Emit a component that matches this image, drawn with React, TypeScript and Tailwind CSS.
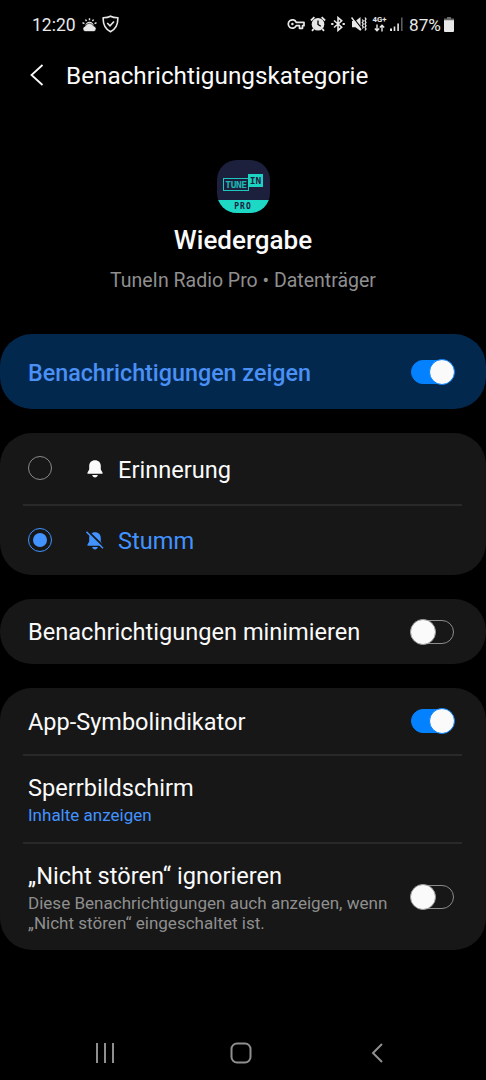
import { useState } from "react";
import clsx from "clsx";

function Switch({ on, onChange }: { on: boolean; onChange: () => void }) {
  return (
    <button
      role="switch"
      aria-checked={on}
      onClick={onChange}
      className={clsx(
        "relative h-6 w-[43px] shrink-0 rounded-full border",
        on ? "border-[#0381fe] bg-[#0381fe]" : "border-[#8c8c8c] bg-transparent"
      )}
    >
      <span
        className={clsx(
          "absolute -top-[2px] size-[26px] rounded-full border bg-[#fafafa]",
          on ? "-right-[2px] border-[#0381fe]" : "-left-[2px] border-[#9a9a9a]"
        )}
      />
    </button>
  );
}

function Radio({ checked }: { checked: boolean }) {
  return (
    <span
      className={clsx(
        "-mt-px flex size-6 items-center justify-center rounded-full border",
        checked ? "border-[#4293ff]" : "border-[#8a8a8a]"
      )}
    >
      {checked && <span className="size-[14px] rounded-full bg-[#4293ff]" />}
    </span>
  );
}

function Bell({ off }: { off?: boolean }) {
  return (
    <svg width="18" height="20" viewBox="0 0 18 20" fill="none">
      <path
        d="M9 1.200C5.500 1.200 3.200 3.600 3.200 6.900v3.600L1.500 13.400v1.300h15v-1.300l-1.700-2.900V6.900C14.800 3.600 12.500 1.200 9 1.200Z"
        fill="currentColor"
      />
      <path d="M6.200 16h5.600c-.3 1.600-1.400 2.500-2.800 2.500S6.500 17.600 6.200 16Z" fill="currentColor" />
      {off && (
        <>
          <path d="M1.800 0 18 16" stroke="#171717" strokeWidth="2" />
          <path d="M.5 .9 17 17.200" stroke="currentColor" strokeWidth="1.500" />
        </>
      )}
    </svg>
  );
}

function StatusBar() {
  return (
    <div className="flex h-[50px] items-center pl-[32px] pr-[31px] text-[17.500px] text-[#e8e8e8]">
      <span className="w-[44px] whitespace-nowrap pt-px">12:20</span>
      {/* weather */}
      <svg className="ml-[6px]" width="15" height="14" viewBox="0 0 15 14" fill="none">
        <path d="M3.300 8a4.200 4.200 0 0 1 8.400 0" fill="currentColor" />
        <path
          d="M7.500 .3v2M3.500 1.500l1 1.700M11.500 1.500l-1 1.700M.5 4.600l1.900 1M14.500 4.600l-1.900 1"
          stroke="currentColor"
          strokeWidth="1.400"
        />
        <path d="M3 13.500a2.700 2.700 0 0 1 .2-5.300 4.500 4.500 0 0 1 8.300-.2 2.800 2.800 0 0 1 .5 5.500Z" fill="currentColor" stroke="#000" strokeWidth=".6" />
      </svg>
      {/* shield */}
      <svg className="ml-[5px] -mt-[2px]" width="17" height="18" viewBox="0 0 17 18" fill="none" stroke="currentColor" strokeWidth="1.600">
        <path d="M8.500 1.200C6.500 2.400 4.200 2.800 1.200 2.800c-.3 5.800 1.300 11 7.300 13.900 6-2.900 7.600-8.100 7.300-13.900-3 0-5.300-.4-7.300-1.600Z" />
        <path d="m5.200 8 2.800 2.800L12 6.500" />
      </svg>
      <div className="ml-auto flex items-center">
        {/* vpn key */}
        <svg className="-mt-[2px]" width="18" height="12" viewBox="0 0 18 12" fill="none" stroke="currentColor" strokeWidth="1.700">
          <path d="M9.300 4.300A4.200 4.200 0 1 0 9.300 7.700h3.200v2.600h3V7.700h1.500V4.300Z" strokeLinejoin="round" />
          <circle cx="5.400" cy="6" r="1.200" fill="currentColor" stroke="none" />
        </svg>
        {/* alarm */}
        <svg className="ml-[5px] -mt-[2px]" width="16" height="16" viewBox="0 0 16 16" fill="none">
          <circle cx="8" cy="8.200" r="6.300" fill="currentColor" />
          <path d="M.9 4.500 4.400 1.200M15.100 4.500l-3.500-3.300M3.700 12.800l-1.700 2M12.300 12.800l1.700 2" stroke="currentColor" strokeWidth="1.800" />
          <path d="M8 4.500v4l2.800 1.800" stroke="#000" strokeWidth="1.300" />
        </svg>
        {/* bluetooth */}
        <svg className="ml-[5px] -mt-[2px]" width="14" height="16" viewBox="0 0 14 16" fill="none" stroke="currentColor" strokeWidth="1.600">
          <path d="m3 4.500 7.700 6.700L7 14.400V1.600l3.700 3.200L3 11.500" />
          <path d="M.2 8h2.200M11.600 8h2.200" strokeWidth="2" />
        </svg>
        {/* vibrate */}
        <svg className="ml-[6px] -mt-[2px]" width="16" height="16" viewBox="0 0 16 16" fill="none">
          <path d="M1 5h3.500L9.500 1v14L4.500 11.300H1Z" fill="currentColor" />
          <path d="m1.800 1.200 9 11.500" stroke="#000" strokeWidth="1.200" />
          <path d="m.5 1.500 9.500 12.500" stroke="currentColor" strokeWidth="1.500" />
          <path d="m11.300 3.500 1 1.500-1 1.500 1 1.500-1 1.500 1 1.500-1 1.500M14 1.500l1 1.600-1 1.700 1 1.600-1 1.600 1 1.700-1 1.600 1 1.700-1 1.500" stroke="currentColor" strokeWidth="1.300" />
        </svg>
        <div className="-mt-px ml-[5px] flex w-[15px] flex-col items-center">
          <span className="text-[7.800px] font-bold leading-[8px]">4G+</span>
          <svg width="11" height="8" viewBox="0 0 11 8" fill="none" stroke="currentColor" strokeWidth="1.400">
            <path d="M3 .5v6M.8 4.500 3 6.700l2.200-2.200M8 7.500v-6M5.800 3.500 8 1.300l2.200 2.200" />
          </svg>
        </div>
        {/* signal */}
        <svg className="ml-[3px]" width="13" height="15" viewBox="0 0 13 15" fill="currentColor">
          <path d="M0 11.500h2v2.500H0zM3.700 9.500h1.600V14H3.700zM7.300 6.500h1.600V14H7.300z" />
          <path d="M11 .5h1.600V14H11z" opacity=".4" />
        </svg>
        <span className="ml-[6px] w-[35px] whitespace-nowrap pt-px text-[17.200px]">87%</span>
        {/* battery */}
        <svg className="-mt-px mr-px" width="10" height="15" viewBox="0 0 10 15" fill="currentColor">
          <path d="M3 0h4v1.500h3V4H0V1.500h3Z" opacity=".45" />
          <path d="M0 3.200h10V14a1 1 0 0 1-1 1H1a1 1 0 0 1-1-1Z" />
        </svg>
      </div>
    </div>
  );
}

function AppIcon() {
  return (
    <div className="flex size-[53px] flex-col overflow-hidden rounded-[20px] bg-[#1c203c] font-['DejaVu_Sans_Mono'] font-bold">
      <div className="flex flex-1 items-start justify-center pt-[14px]">
        <span className="mt-[4px] flex h-[13px] w-[26px] items-center justify-center border border-[#1cc8bd] text-[9.500px] leading-none tracking-[-0.4px] text-[#1cb8b4]">
          TUNE
        </span>
        <span className="-ml-px flex h-[13px] w-[15px] items-center justify-center bg-[#1cd3c3] text-[9.500px] leading-none text-[#1c203c]">
          IN
        </span>
      </div>
      <div className="flex h-[13px] items-center justify-center bg-[#1cd8c4] text-[8px] leading-none tracking-[1px] text-[#1c203c]">
        PRO
      </div>
    </div>
  );
}

function Divider() {
  return <div className="ml-[23px] mr-6 h-[2px] bg-[#292929]" />;
}

export default function App() {
  const [show, setShow] = useState(true);
  const [mode, setMode] = useState("silent");
  const [minimize, setMinimize] = useState(false);
  const [badge, setBadge] = useState(true);
  const [ignoreDnd, setIgnoreDnd] = useState(false);

  return (
    <div className="flex h-[1080px] w-[486px] flex-col overflow-hidden bg-black font-[Roboto,sans-serif] text-[#fafafa]">
      <StatusBar />

      <header className="flex h-[50px] items-center pl-[30px]">
        <svg width="14" height="22" viewBox="0 0 14 22" fill="none" stroke="currentColor" strokeWidth="1.800">
          <path d="M12.500 1 1.500 11l11 10" />
        </svg>
        <h1 className="ml-[22px] pt-[2px] text-[24.300px]">Benachrichtigungskategorie</h1>
      </header>

      {/* App info */}
      <section className="flex h-[234px] flex-col items-center pt-[60px]">
        <AppIcon />
        <h2 className="mt-[9px] text-[26px] font-medium leading-9">Wiedergabe</h2>
        <p className="mt-[10px] text-[19.500px] leading-[26px] text-[#8f8f8f]">TuneIn Radio Pro • Datenträger</p>
      </section>

      <main className="flex flex-col gap-6 text-[23.600px] leading-[30px]">
        <section className="flex h-[75px] items-center justify-between rounded-[32px] bg-[#03284e] pl-[28px] pr-[32px] font-medium text-[#4a90f5]">
          <span className="pt-[2px] text-[23.300px]">Benachrichtigungen zeigen</span>
          <Switch on={show} onChange={() => setShow(!show)} />
        </section>

        <section className="h-[142px] rounded-[32px] bg-[#171717]">
          <button onClick={() => setMode("alert")} className="flex h-[71px] w-full items-center pl-[28px]">
            <Radio checked={mode === "alert"} />
            <span className="ml-[34px] mr-[14px]">
              <Bell />
            </span>
            <span className="pt-[2px]">Erinnerung</span>
          </button>
          <Divider />
          <button
            onClick={() => setMode("silent")}
            className="flex h-[69px] w-full items-center pl-[28px] text-[#4293ff]"
          >
            <Radio checked={mode === "silent"} />
            <span className="ml-[34px] mr-[14px]">
              <Bell off />
            </span>
            <span className="pt-px">Stumm</span>
          </button>
        </section>

        <section className="flex h-[65px] items-center justify-between rounded-[32px] bg-[#171717] pl-[28px] pr-[32px]">
          <span className="pt-px">Benachrichtigungen minimieren</span>
          <Switch on={minimize} onChange={() => setMinimize(!minimize)} />
        </section>

        <section className="h-[262px] rounded-[32px] bg-[#171717]">
          <div className="flex h-[66px] items-center justify-between pl-[28px] pr-[32px]">
            <span className="pt-[2px] text-[23.500px]">App-Symbolindikator</span>
            <Switch on={badge} onChange={() => setBadge(!badge)} />
          </div>
          <Divider />
          <div className="flex h-[86px] flex-col justify-center pl-[28px] pt-[2px]">
            <span>Sperrbildschirm</span>
            <span className="text-[17px] leading-6 text-[#4293ff]">Inhalte anzeigen</span>
          </div>
          <Divider />
          <div className="flex h-[106px] items-center justify-between pl-[28px] pr-[32px]">
            <div>
              <div>„Nicht stören“ ignorieren</div>
              <div className="mt-[2px] whitespace-nowrap text-[17.060px] leading-5 text-[#8f8f8f]">
                Diese Benachrichtigungen auch anzeigen, wenn
                <br />
                „Nicht stören“ eingeschaltet ist.
              </div>
            </div>
            <Switch on={ignoreDnd} onChange={() => setIgnoreDnd(!ignoreDnd)} />
          </div>
        </section>
      </main>

      {/* System navigation */}
      <nav className="mt-auto flex h-[54px] items-center pl-[95px] text-[#8f8f8f]">
        <svg width="20" height="20" viewBox="0 0 20 20" stroke="currentColor" strokeWidth="2">
          <path d="M2 0v20M10 0v20M18 0v20" />
        </svg>
        <svg className="ml-[115px]" width="22" height="22" viewBox="0 0 22 22" fill="none" stroke="currentColor" strokeWidth="2">
          <rect x="1.500" y="1.500" width="19" height="19" rx="5.500" />
        </svg>
        <svg className="ml-[119px]" width="12" height="20" viewBox="0 0 12 20" fill="none" stroke="currentColor" strokeWidth="2">
          <path d="M11 1 2 10l9 9" />
        </svg>
      </nav>
    </div>
  );
}
